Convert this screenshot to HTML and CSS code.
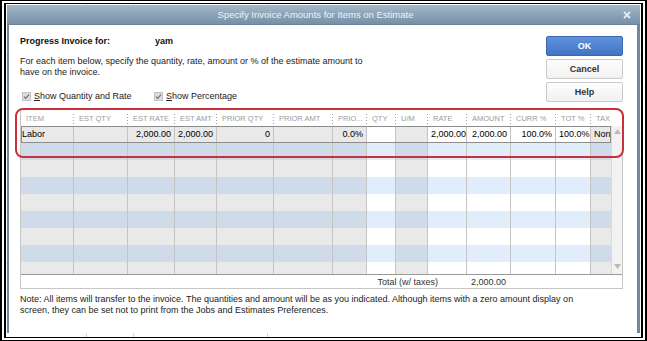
FILE: index.html
```html
<!DOCTYPE html>
<html>
<head>
<meta charset="UTF-8">
<meta name="viewport" content="width=device-width, initial-scale=1.0">
<title>Specify Invoice Amounts for Items on Estimate</title>
<link rel="stylesheet" href="styles.css">
</head>
<body>
<div class="frame">
<div class="screen">
  <div class="dialog">
    <div class="titlebar">
      <span class="title">Specify Invoice Amounts for Items on Estimate</span>
      <svg class="close" width="8" height="8" viewBox="0 0 8 8"><path d="M1 1 L7 7 M7 1 L1 7" /></svg>
    </div>

    <div class="body">
      <div class="top">
        <div class="intro">
          <p class="for"><b class="for-label">Progress Invoice for:</b><b>yam</b></p>
          <p class="help">For each item below, specify the quantity, rate, amount or % of the estimate amount to<br>have on the invoice.</p>
          <div class="checks">
            <label class="check first">
              <svg class="box" width="9" height="9" viewBox="0 0 9 9"><rect x="0.5" y="0.5" width="8" height="8" /><path d="M2 4.6 L3.7 6.3 L7 2.6" /></svg>
              <span><u>S</u>how Quantity and Rate</span>
            </label>
            <label class="check">
              <svg class="box" width="9" height="9" viewBox="0 0 9 9"><rect x="0.5" y="0.5" width="8" height="8" /><path d="M2 4.6 L3.7 6.3 L7 2.6" /></svg>
              <span><u>S</u>how Percentage</span>
            </label>
          </div>
        </div>
        <div class="buttons">
          <button class="btn ok">OK</button>
          <button class="btn">Cancel</button>
          <button class="btn">Help</button>
        </div>
      </div>

      <div class="grid-wrap">
        <div class="grid">
          <div class="head">
            <div class="cols">
              <span class="first">ITEM</span>
              <span>EST QTY</span>
              <span>EST RATE</span>
              <span>EST AMT</span>
              <span>PRIOR QTY</span>
              <span>PRIOR AMT</span>
              <span>PRIO...</span>
              <span>QTY</span>
              <span>U/M</span>
              <span>RATE</span>
              <span>AMOUNT</span>
              <span>CURR %</span>
              <span>TOT %</span>
              <span>TAX</span>
            </div>
            <div class="scroll-head"></div>
          </div>

          <div class="main">
            <div class="rows">
              <div class="row current">
                <span class="txt">Labor</span><span></span><span>2,000.00</span><span>2,000.00</span><span>0</span><span></span><span>0.0%</span><span></span><span></span><span>2,000.00</span><span>2,000.00</span><span>100.0%</span><span>100.0%</span><span class="txt">Non</span>
              </div>
              <div class="row"><span></span><span></span><span></span><span></span><span></span><span></span><span></span><span></span><span></span><span></span><span></span><span></span><span></span><span></span></div>
              <div class="row"><span></span><span></span><span></span><span></span><span></span><span></span><span></span><span></span><span></span><span></span><span></span><span></span><span></span><span></span></div>
              <div class="row"><span></span><span></span><span></span><span></span><span></span><span></span><span></span><span></span><span></span><span></span><span></span><span></span><span></span><span></span></div>
              <div class="row"><span></span><span></span><span></span><span></span><span></span><span></span><span></span><span></span><span></span><span></span><span></span><span></span><span></span><span></span></div>
              <div class="row"><span></span><span></span><span></span><span></span><span></span><span></span><span></span><span></span><span></span><span></span><span></span><span></span><span></span><span></span></div>
              <div class="row"><span></span><span></span><span></span><span></span><span></span><span></span><span></span><span></span><span></span><span></span><span></span><span></span><span></span><span></span></div>
              <div class="row"><span></span><span></span><span></span><span></span><span></span><span></span><span></span><span></span><span></span><span></span><span></span><span></span><span></span><span></span></div>
              <div class="row"><span></span><span></span><span></span><span></span><span></span><span></span><span></span><span></span><span></span><span></span><span></span><span></span><span></span><span></span></div>
            </div>
            <div class="scrollbar">
              <svg width="7" height="5" viewBox="0 0 7 5"><path d="M0 5 L3.5 0 L7 5 Z" /></svg>
              <svg width="7" height="5" viewBox="0 0 7 5"><path d="M0 0 L3.5 5 L7 0 Z" /></svg>
            </div>
          </div>

          <div class="total">
            <span class="total-label">Total (w/ taxes)</span>
            <span class="total-amt">2,000.00</span>
          </div>
        </div>
        <div class="highlight"></div>
      </div>

      <p class="note">Note: All items will transfer to the invoice. The quantities and amount will be as you indicated. Although items with a zero amount display on<br>screen, they can be set not to print from the Jobs and Estimates Preferences.</p>
    </div>
  </div>
</div>
</div>
</body>
</html>
```

FILE: styles.css
```css
* {
    box-sizing: border-box;
}
body {
    margin: 0;
    font-family: "Liberation Sans", Arial, sans-serif;
    font-size: 9px;
    color: #222;
    background: #fff;
}
p {
    margin: 0;
}

/* screenshot frame */
.frame {
    width: 647px;
    height: 341px;
    border: solid #000;
    border-width: 1px 2px;
    padding: 2px;
}
.screen {
    height: 100%;
    border: solid #000;
    border-width: 1px 2px;
    padding: 1px 1px 0 1px;
    background:
        linear-gradient(#d6d6d6, #d6d6d6) 80px 0 / 1px 100% no-repeat,
        linear-gradient(#d6d6d6, #d6d6d6) 127px 0 / 1px 100% no-repeat,
        linear-gradient(#d6d6d6, #d6d6d6) 261px 0 / 1px 100% no-repeat,
        repeating-linear-gradient(to bottom, #fff 0 25px, #e2e2e2 25px 26px);
}

/* dialog */
.dialog {
    height: 328px;
    display: flex;
    flex-direction: column;
    background: #fff;
}
.titlebar {
    height: 20px;
    flex: none;
    display: flex;
    align-items: center;
    justify-content: center;
    position: relative;
    padding-right: 16px;
    background: linear-gradient(#a3b8c9, #7590a7);
    border-bottom: 1px solid #6a849b;
}
.title {
    font-size: 9.5px;
    color: #eef2f5;
}
.close {
    position: absolute;
    right: 9px;
    top: 6px;
}
.close path {
    stroke: #e4e9ee;
    stroke-width: 1.8;
}
.body {
    flex: 1;
    border: solid #6e889f;
    border-width: 0 3px 0 2px;
    padding: 11px 14px 0 11px;
}

/* top part */
.top {
    display: flex;
    justify-content: space-between;
    height: 66px;
}
.for {
    line-height: 11px;
    color: #111;
}
.for-label {
    display: inline-block;
    width: 135px;
}
.help {
    margin-top: 9px;
    line-height: 11px;
}
.checks {
    margin-top: 13px;
    display: flex;
    line-height: 11px;
}
.check {
    display: flex;
    align-items: center;
}
.check.first {
    width: 132px;
}
.box {
    margin: 0 3px 0 2px;
}
.box rect {
    fill: #dcdcdc;
    stroke: #c2c2c2;
}
.box path {
    fill: none;
    stroke: #6f6f6f;
    stroke-width: 1.2;
}
.buttons {
    width: 77px;
    display: flex;
    flex-direction: column;
    gap: 3px;
}
.btn {
    height: 20px;
    padding: 0;
    font-family: inherit;
    font-size: 9px;
    font-weight: bold;
    color: #333;
    background: linear-gradient(#fdfdfd, #f1f1f1);
    border: 1px solid #cbcbcb;
    border-radius: 2px;
}
.btn.ok {
    color: #fff;
    background: linear-gradient(#5f93dc, #4274c4);
    border-color: #3a67b0;
}

/* grid */
.grid-wrap {
    position: relative;
    margin-top: 9px;
}
.grid {
    border: 1px solid #c6c6c6;
    border-top: 0;
}
.head,
.main {
    display: flex;
}
.cols,
.row {
    width: 590px;
    display: grid;
    grid-template-columns: 52px 54px 47px 42px 57px 59px 34px 29px 32px 39px 44px 45px 35px 21px;
}
.cols {
    height: 15px;
    background: #fff;
}
.cols span {
    display: flex;
    align-items: center;
    gap: 5px;
    font-size: 7.5px;
    color: #9c9c9c;
    white-space: nowrap;
    overflow: hidden;
}
.cols span::before {
    content: "";
    width: 1px;
    height: 10px;
    flex: none;
    background: repeating-linear-gradient(to bottom, #a3a3a3 0 1px, transparent 1px 3px);
}
.cols .first {
    padding-left: 5px;
}
.cols .first::before {
    display: none;
}
.scroll-head {
    width: 11px;
}
.rows {
    height: 148px;
    overflow: hidden;
}
.row {
    height: 17px;
}
.row span {
    line-height: 17px;
    padding: 0 3px;
    text-align: right;
    color: #000;
    white-space: nowrap;
    overflow: hidden;
    border-left: 1px solid #c4c4c4;
    background: #e9e9e9;
}
.row span:first-child {
    border-left: 0;
    padding-left: 1px;
}
.row .txt {
    text-align: left;
}
.row span:nth-child(8),
.row span:nth-child(n+10):nth-child(-n+13) {
    background: #fff;
}
.row:nth-child(even) span {
    background: #cfdbe8;
}
.row:nth-child(even) span:nth-child(8),
.row:nth-child(even) span:nth-child(n+10):nth-child(-n+13) {
    background: #e2edfb;
}
.row.current {
    outline: 1px solid #8c8c8c;
    outline-offset: -1px;
}
.scrollbar {
    width: 11px;
    display: flex;
    flex-direction: column;
    justify-content: space-between;
    align-items: center;
    padding: 3px 0 5px;
    background: #f2f2f2;
    border-left: 1px solid #dadada;
}
.scrollbar path {
    fill: #b9b9b9;
}
.total {
    height: 14px;
    display: flex;
    align-items: center;
    border-top: 1px solid #9a9a9a;
    background: #fff;
    color: #333;
}
.total-label {
    width: 417px;
    text-align: right;
}
.total-amt {
    width: 68px;
    text-align: right;
}
.highlight {
    position: absolute;
    left: -5px;
    top: -3px;
    width: 609px;
    height: 50px;
    border: 2px solid #c9303a;
    border-radius: 8px;
}

.note {
    margin-top: 5px;
    line-height: 11px;
}
```
